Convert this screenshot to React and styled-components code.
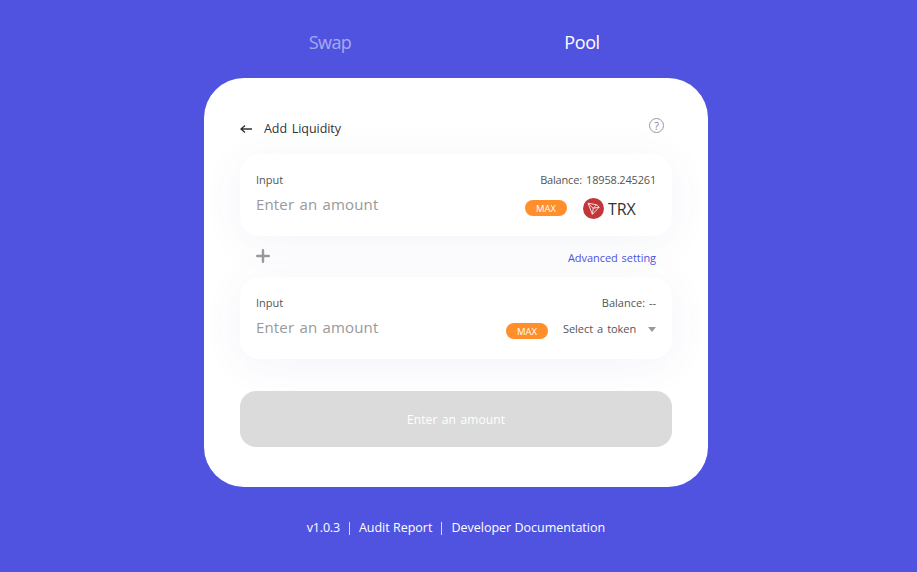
import React from "react";
import styled, { createGlobalStyle } from "styled-components";

const GlobalStyle = createGlobalStyle`
  * {
    box-sizing: border-box;
  }
  body {
    margin: 0;
    background: #5053e0;
    font-family: "Open Sans", "Noto Sans", sans-serif;
  }
  button, input {
    font-family: inherit;
  }
`;

const Page = styled.div`
  height: 572px;
  padding-left: 204px;
  overflow: hidden;
  background: #5053e0;
`;
const Container = styled.div`
  width: 504px;
`;
const Tabs = styled.nav`
  display: flex;
  height: 78px;
  padding-top: 29px;
`;
const Tab = styled.a`
  flex: 1;
  text-align: center;
  font-size: 18px;
  line-height: 26px;
  letter-spacing: ${(props) => props.$spacing};
  color: ${(props) => (props.$active ? "#fff" : "rgba(255, 255, 255, 0.5)")};
`;
const Card = styled.main`
  height: 409px;
  padding: 36px 36px 40px;
  border-radius: 40px;
  background: #fff;
`;
const Header = styled.header`
  display: flex;
  align-items: flex-start;
  height: 40px;
  color: #333;
`;
const BackIcon = styled.svg`
  width: 12px;
  height: 10px;
  margin: 10px 12px 0 0;
`;
const Title = styled.h1`
  flex: 1;
  margin: 5px 0 0;
  font-size: 12.5px;
  font-weight: 400;
  line-height: 20px;
  letter-spacing: -0.05px;
  word-spacing: 1.5px;
`;
const Help = styled.span`
  display: flex;
  align-items: center;
  justify-content: center;
  width: 15px;
  height: 15px;
  margin: 4px 8px 0 0;
  border: 1px solid #999;
  border-radius: 50%;
  color: #888;
  font-size: 11px;
  line-height: 13px;
`;
const Panel = styled.section`
  position: relative;
  height: 82px;
  padding: 16px;
  border-radius: 20px;
  background: #fff;
  box-shadow: 0 6px 40px rgba(68, 83, 170, 0.065);
`;
const Row = styled.div`
  display: flex;
  justify-content: space-between;
  height: ${(props) => props.$height};
`;
const Label = styled.span`
  font-size: 11px;
  line-height: 20px;
  letter-spacing: ${(props) => props.$spacing || "0"};
  word-spacing: ${(props) => props.$gap || "0"};
  color: #555;
`;
const AmountInput = styled.input`
  width: 160px;
  height: 24px;
  padding: 0;
  border: 0;
  outline: 0;
  background: none;
  font-size: 15px;
  letter-spacing: 0.15px;
  word-spacing: 1.2px;
  &::placeholder {
    color: #999;
    opacity: 1;
  }
`;
const Actions = styled.div`
  display: flex;
  align-items: flex-start;
`;
const MaxButton = styled.button`
  width: 42px;
  height: 16px;
  margin-top: 8px;
  margin-right: ${(props) => props.$gap};
  padding: 1px 0 0;
  border: 0;
  border-radius: 8px;
  background: #ff8e2b;
  color: #fff;
  font-size: 9.5px;
  line-height: 15px;
`;
const Token = styled.div`
  display: flex;
  align-items: center;
  width: 73px;
  height: 21px;
  margin-top: 6px;
`;
const TokenIcon = styled.svg`
  width: 21px;
  height: 21px;
  margin-right: 4px;
`;
const TokenName = styled.span`
  padding-top: 2px;
  font-size: 16px;
  line-height: 21px;
  letter-spacing: -0.1px;
  color: #333;
`;
const TokenSelect = styled.div`
  display: flex;
  align-items: center;
  justify-content: space-between;
  width: 93px;
  height: 20px;
  margin-top: 3px;
  font-size: 11px;
  letter-spacing: -0.05px;
  word-spacing: 1.2px;
  color: #555;
`;
const Caret = styled.span`
  margin-top: 2px;
  border: 4px solid transparent;
  border-top: 5px solid #999;
  border-bottom: 0;
`;
const Divider = styled.div`
  display: flex;
  justify-content: space-between;
  position: relative;
  height: 41px;
  padding: 12px 16px 0;
`;
const PlusIcon = styled.svg`
  width: 14px;
  height: 14px;
  margin-top: 1px;
`;
const SettingLink = styled.a`
  font-size: 11px;
  line-height: 20px;
  letter-spacing: -0.05px;
  word-spacing: 1px;
  color: #5053e0;
`;
const SubmitButton = styled.button`
  position: relative;
  display: block;
  width: 100%;
  height: 56px;
  margin-top: 32px;
  padding: 0;
  border: 0;
  border-radius: 16px;
  background: #dbdbdb;
  color: #fff;
  font-size: 12px;
  letter-spacing: 0.1px;
  word-spacing: 1.2px;
`;
const Footer = styled.footer`
  display: flex;
  justify-content: center;
  gap: 8px;
  margin-top: 31px;
  font-size: 12.5px;
  line-height: 20px;
  color: #fff;
`;
const FooterItem = styled.span`
  letter-spacing: ${(props) => props.$spacing || "0"};
`;
const FooterLine = styled.i`
  width: 1px;
  height: 13px;
  margin: 4px 1px 0;
  background: #d4d5f8;
`;

const TrxIcon = () => (
  <TokenIcon viewBox="0 0 21 21" fill="none">
    <circle cx="10.5" cy="10.5" r="10.5" fill="#c23639" />
    <path
      d="M5 5.2L13.6 6.8L16.2 9.2L9.4 16.3ZM5 5.2L10.2 10.3L13.6 6.8M10.2 10.3L16.2 9.2M10.2 10.3L9.4 16.3"
      stroke="#f5dcdc"
      strokeWidth="1"
      strokeLinejoin="round"
    />
  </TokenIcon>
);

const App = () => {
  return (
    <>
      <GlobalStyle />
      <Page>
        <Container>
          <Tabs>
            <Tab $spacing="-0.6px">Swap</Tab>
            <Tab $active $spacing="-0.4px">Pool</Tab>
          </Tabs>
          <Card>
            <Header>
              <BackIcon viewBox="0 0 12 10" fill="none" stroke="#333" strokeWidth="1.4">
                <path d="M12 5H1M5 1.5L1 5L5 8.5" />
              </BackIcon>
              <Title>Add Liquidity</Title>
              <Help>?</Help>
            </Header>
            <Panel>
              <Row $height="22px">
                <Label>Input</Label>
                <Label $spacing="-0.18px" $gap="1.5px">Balance: 18958.245261</Label>
              </Row>
              <Row $height="28px">
                <AmountInput placeholder="Enter an amount" />
                <Actions>
                  <MaxButton $gap="16px">MAX</MaxButton>
                  <Token>
                    <TrxIcon />
                    <TokenName>TRX</TokenName>
                  </Token>
                </Actions>
              </Row>
            </Panel>
            <Divider>
              <PlusIcon viewBox="0 0 14 14" stroke="#999" strokeWidth="2.4" strokeLinecap="round">
                <path d="M7 1.2V12.8M1.2 7H12.8" />
              </PlusIcon>
              <SettingLink>Advanced setting</SettingLink>
            </Divider>
            <Panel>
              <Row $height="22px">
                <Label>Input</Label>
                <Label $gap="1px">Balance: --</Label>
              </Row>
              <Row $height="28px">
                <AmountInput placeholder="Enter an amount" />
                <Actions>
                  <MaxButton $gap="15px">MAX</MaxButton>
                  <TokenSelect>
                    Select a token
                    <Caret />
                  </TokenSelect>
                </Actions>
              </Row>
            </Panel>
            <SubmitButton>Enter an amount</SubmitButton>
          </Card>
          <Footer>
            <FooterItem $spacing="-0.2px">v1.0.3</FooterItem>
            <FooterLine />
            <FooterItem>Audit Report</FooterItem>
            <FooterLine />
            <FooterItem>Developer Documentation</FooterItem>
          </Footer>
        </Container>
      </Page>
    </>
  );
};

export default App;
